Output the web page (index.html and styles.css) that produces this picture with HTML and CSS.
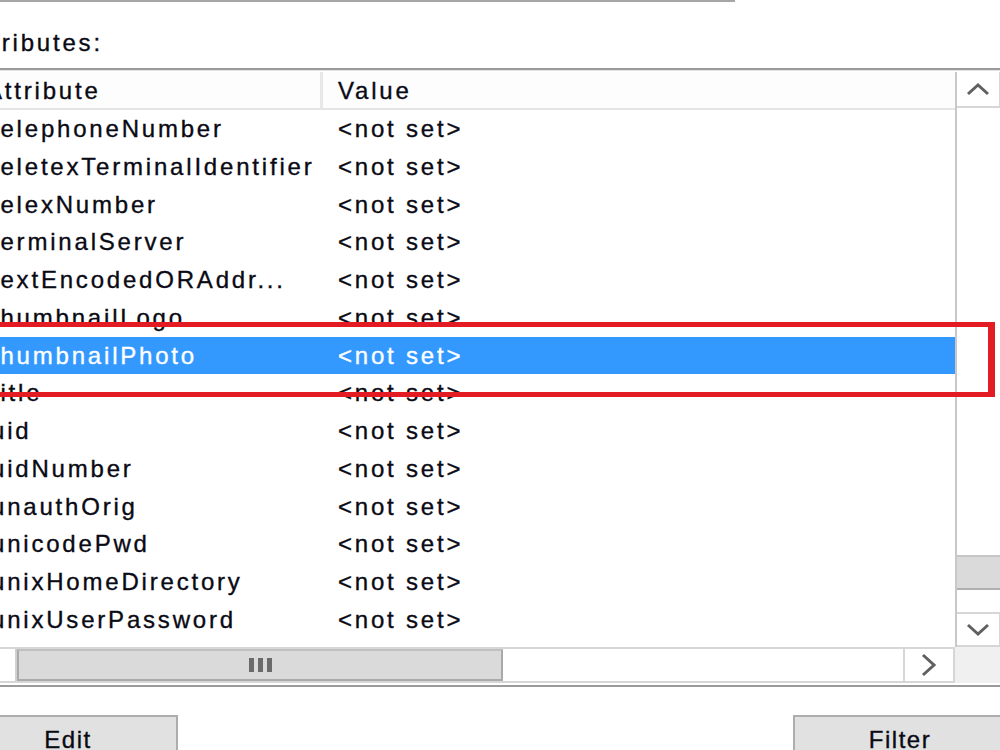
FILE: index.html
```html
<!DOCTYPE html>
<html>
<head>
<meta charset="utf-8">
<link rel="stylesheet" href="styles.css">
</head>
<body>
<div class="dialog">
  <div class="topfield"></div>
  <div class="label">Attributes:</div>
  <div class="listbox">
    <div class="listmain">
      <div class="header">
        <div class="hcell hattr">Attribute</div>
        <div class="hcell hval">Value</div>
      </div>
      <div class="rows">
        <div class="row"><span class="c1">telephoneNumber</span><span class="c2">&lt;not set&gt;</span></div>
        <div class="row"><span class="c1">teletexTerminalIdentifier</span><span class="c2">&lt;not set&gt;</span></div>
        <div class="row"><span class="c1">telexNumber</span><span class="c2">&lt;not set&gt;</span></div>
        <div class="row"><span class="c1">terminalServer</span><span class="c2">&lt;not set&gt;</span></div>
        <div class="row"><span class="c1">textEncodedORAddr...</span><span class="c2">&lt;not set&gt;</span></div>
        <div class="row"><span class="c1">thumbnailLogo</span><span class="c2">&lt;not set&gt;</span></div>
        <div class="row selected"><span class="c1">thumbnailPhoto</span><span class="c2">&lt;not set&gt;</span></div>
        <div class="row"><span class="c1">title</span><span class="c2">&lt;not set&gt;</span></div>
        <div class="row"><span class="c1">uid</span><span class="c2">&lt;not set&gt;</span></div>
        <div class="row"><span class="c1">uidNumber</span><span class="c2">&lt;not set&gt;</span></div>
        <div class="row"><span class="c1">unauthOrig</span><span class="c2">&lt;not set&gt;</span></div>
        <div class="row"><span class="c1">unicodePwd</span><span class="c2">&lt;not set&gt;</span></div>
        <div class="row"><span class="c1">unixHomeDirectory</span><span class="c2">&lt;not set&gt;</span></div>
        <div class="row"><span class="c1">unixUserPassword</span><span class="c2">&lt;not set&gt;</span></div>
        <div class="row"><span class="c1">url</span><span class="c2">&lt;not set&gt;</span></div>
      </div>
    </div>
    <div class="vscroll">
      <div class="sbtn up"><svg width="24" height="14" viewBox="0 0 24 14"><polyline points="2,12 12,3 22,12" fill="none" stroke="#606060" stroke-width="3"/></svg></div>
      <div class="vspace"></div>
      <div class="vthumb"></div>
      <div class="vgap"></div>
      <div class="sbtn down"><svg width="24" height="14" viewBox="0 0 24 14"><polyline points="2,2 12,11 22,2" fill="none" stroke="#606060" stroke-width="3"/></svg></div>
    </div>
    <div class="hscroll">
      <div class="hbtn left"></div>
      <div class="hthumb"><svg width="24" height="14" viewBox="0 0 24 14"><rect x="1" y="0" width="5" height="14" fill="#6a6a6a"/><rect x="10" y="0" width="5" height="14" fill="#6a6a6a"/><rect x="19" y="0" width="5" height="14" fill="#6a6a6a"/></svg></div>
      <div class="htrack"></div>
      <div class="hbtn right"><svg width="16" height="24" viewBox="0 0 16 24"><polyline points="2,2 13,12 2,22" fill="none" stroke="#606060" stroke-width="3"/></svg></div>
    </div>
    <div class="corner"></div>
  </div>
  <div class="buttons">
    <div class="btn edit">Edit</div>
    <div class="btn filter">Filter</div>
  </div>
</div>
<div class="highlight"></div>
</body>
</html>
```

FILE: styles.css
```css
html, body {
  margin: 0;
  padding: 0;
  width: 1000px;
  height: 750px;
  overflow: hidden;
  background: #ffffff;
}
body {
  position: relative;
  font-family: "Liberation Sans", Arial, sans-serif;
  font-size: 24px;
  letter-spacing: 2.8px;
  color: #0a0a14;
  -webkit-text-stroke: 0.35px #0a0a14;
}
.dialog {
  margin-left: -40px;
  width: 1060px;
}
.topfield {
  width: 775px;
  height: 0;
  border-bottom: 2px solid #a6a6a6;
}
.label {
  margin-top: 27px;
  margin-left: 4px;
  height: 28px;
  line-height: 28px;
}
.listbox {
  margin-top: 11px;
  margin-left: 18px;
  width: 1024px;
  box-sizing: border-box;
  border: 2px solid #9a9a9a;
  padding: 2px 0;
  box-shadow: inset 0 1px 0 #e4e4e4;
  display: grid;
  grid-template-columns: 975px 45px;
  grid-template-rows: 575px 36px;
}
.listmain {
  overflow: hidden;
  background: #fff;
}
.header {
  height: 36px;
  border-bottom: 2px solid #e5e5e5;
  display: flex;
  background: #fdfdfd;
}
.hcell {
  line-height: 38px;
  white-space: nowrap;
}
.hattr {
  width: 334px;
  padding-left: 6px;
  border-right: 3px solid #e8e8e8;
}
.hval {
  padding-left: 15px;
}
.rows {
  height: 537px;
  overflow: hidden;
}
.row {
  height: 37.77px;
  line-height: 37.77px;
  display: flex;
  white-space: nowrap;
}
.row .c1 {
  width: 347px;
  padding-left: 11px;
  overflow: hidden;
}
.row.selected {
  background: #3399ff;
  color: #ffffff;
  -webkit-text-stroke: 0.35px #ffffff;
}
.vscroll {
  grid-row: 1;
  grid-column: 2;
  border-left: 2px solid #c8c8c8;
  display: flex;
  flex-direction: column;
  background: #ffffff;
}
.sbtn {
  height: 35px;
  border: 1px solid #d6d6d6;
  border-left: none;
  display: flex;
  align-items: center;
  justify-content: center;
  box-sizing: border-box;
}
.sbtn.up {
  height: 36px;
  border-top: none;
  border-bottom: 2px solid #d6d6d6;
}
.vspace {
  flex: 1;
}
.vthumb {
  height: 35px;
  background: #dadada;
  border-top: 2px solid #c6c6c6;
  border-bottom: 2px solid #b0b0b0;
  box-sizing: border-box;
}
.vgap {
  height: 22px;
}
.sbtn.down {
  border-top: 2px solid #d6d6d6;
  border-bottom: 2px solid #d6d6d6;
}
.hscroll {
  grid-row: 2;
  grid-column: 1;
  display: flex;
  border-top: 2px solid #d6d6d6;
  border-bottom: 2px solid #d6d6d6;
  box-sizing: border-box;
  background: #ffffff;
}
.hbtn.left {
  width: 35px;
  border-right: 2px solid #d0d0d0;
}
.hthumb {
  width: 482px;
  background: #dadada;
  border: 2px solid #aaaaaa;
  border-top-color: #c0c0c0;
  display: flex;
  align-items: center;
  justify-content: center;
}
.htrack {
  flex: 1;
}
.hbtn.right {
  width: 48px;
  border-left: 2px solid #d6d6d6;
  border-right: 2px solid #d6d6d6;
  display: flex;
  align-items: center;
  justify-content: center;
}
.corner {
  grid-row: 2;
  grid-column: 2;
  background: #f0f0f0;
}
.buttons {
  margin-top: 28px;
  margin-left: -2px;
  width: 1049px;
  display: flex;
  justify-content: space-between;
}
.btn {
  height: 60px;
  box-sizing: border-box;
  border: 2px solid #adadad;
  background: #e1e1e1;
  text-align: center;
  padding-top: 9px;
  line-height: 28px;
  letter-spacing: 1.5px;
}
.btn.edit {
  width: 220px;
}
.btn.filter {
  width: 214px;
}
.highlight {
  position: absolute;
  left: -10px;
  top: 322px;
  width: 1005px;
  height: 75px;
  box-sizing: border-box;
  border: 5px solid #e31b23;
  border-right-width: 7px;
}
```
